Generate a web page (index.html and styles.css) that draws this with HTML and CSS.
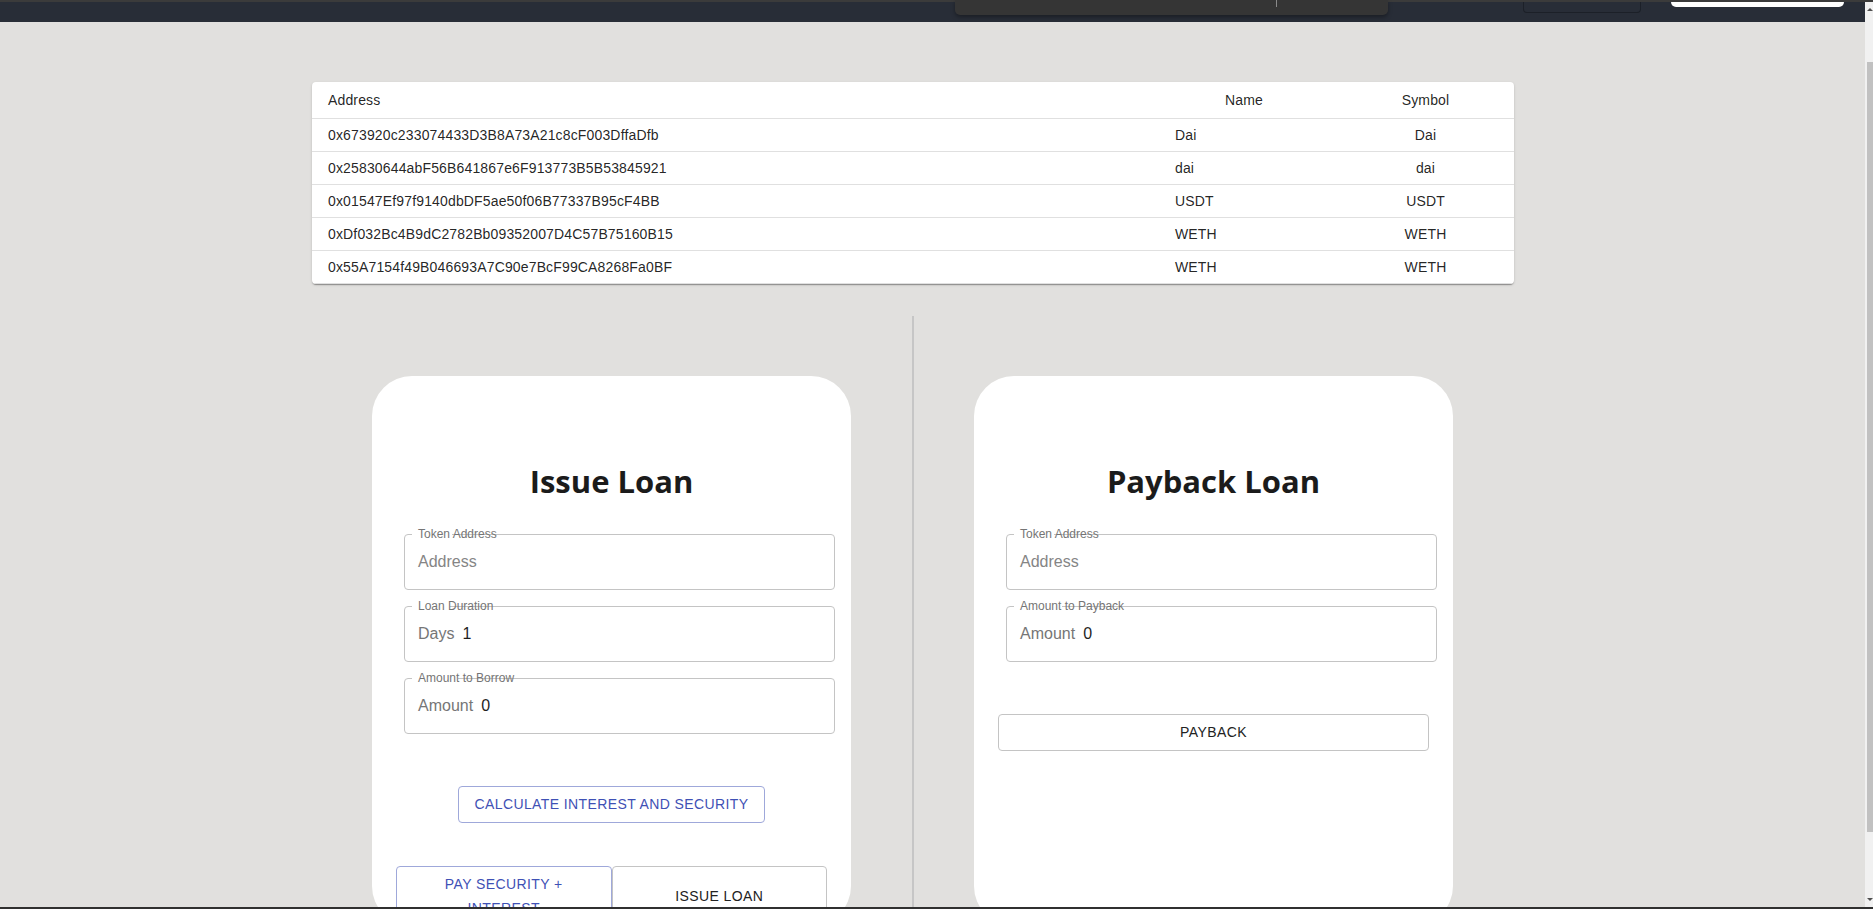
FILE: index.html
```html
<!DOCTYPE html>
<html lang="en">
<head>
<meta charset="utf-8">
<title>Loans</title>
<link rel="stylesheet" href="styles.css">
</head>
<body>
<header class="topbar">
  <div class="menu-pop"><span class="menu-sep"></span></div>
  <div class="nav-btn"></div>
  <div class="nav-pill"></div>
</header>

<main class="page">
  <div class="token-table-wrap">
    <table class="token-table">
      <colgroup><col class="c-addr"><col class="c-name"><col class="c-sym"></colgroup>
      <thead>
        <tr><th>Address</th><th class="center">Name</th><th class="center">Symbol</th></tr>
      </thead>
      <tbody>
        <tr><td>0x673920c233074433D3B8A73A21c8cF003DffaDfb</td><td>Dai</td><td class="center">Dai</td></tr>
        <tr><td>0x25830644abF56B641867e6F913773B5B53845921</td><td>dai</td><td class="center">dai</td></tr>
        <tr><td>0x01547Ef97f9140dbDF5ae50f06B77337B95cF4BB</td><td>USDT</td><td class="center">USDT</td></tr>
        <tr><td>0xDf032Bc4B9dC2782Bb09352007D4C57B75160B15</td><td>WETH</td><td class="center">WETH</td></tr>
        <tr><td>0x55A7154f49B046693A7C90e7BcF99CA8268Fa0BF</td><td>WETH</td><td class="center">WETH</td></tr>
      </tbody>
    </table>
  </div>

  <section class="forms">
    <div class="col">
      <div class="card">
        <h2 class="card-title">Issue Loan</h2>
        <div class="fields">
          <div class="field">
            <span class="notch n-token"></span>
            <span class="field-label">Token Address</span>
            <span class="ph">Address</span>
          </div>
          <div class="field">
            <span class="notch n-duration"></span>
            <span class="field-label">Loan Duration</span>
            <span class="adorn">Days</span><span class="val">1</span>
          </div>
          <div class="field">
            <span class="notch n-borrow"></span>
            <span class="field-label">Amount to Borrow</span>
            <span class="adorn">Amount</span><span class="val">0</span>
          </div>
        </div>
        <div class="calc-row">
          <button class="btn btn-primary">Calculate Interest and Security</button>
        </div>
        <div class="pair-row">
          <button class="btn btn-primary btn-half">Pay Security + Interest</button>
          <button class="btn btn-half">Issue Loan</button>
        </div>
      </div>
    </div>

    <div class="divider"></div>

    <div class="col">
      <div class="card">
        <h2 class="card-title">Payback Loan</h2>
        <div class="fields">
          <div class="field">
            <span class="notch n-token"></span>
            <span class="field-label">Token Address</span>
            <span class="ph">Address</span>
          </div>
          <div class="field">
            <span class="notch n-payback"></span>
            <span class="field-label">Amount to Payback</span>
            <span class="adorn">Amount</span><span class="val">0</span>
          </div>
        </div>
        <div class="payback-row">
          <button class="btn btn-full">Payback</button>
        </div>
      </div>
    </div>
  </section>
</main>

<div class="scrollbar">
  <span class="arrow-up"></span>
  <div class="thumb"></div>
  <span class="arrow-down"></span>
</div>
<div class="bottom-line"></div>
</body>
</html>
```

FILE: styles.css
```css
html, body {
  margin: 0;
  height: 100%;
  overflow: hidden;
}

body {
  background: #e1e0de;
  font-family: "Liberation Sans", Arial, sans-serif;
  color: rgba(0, 0, 0, 0.87);
}

/* ---------- top bar ---------- */
.topbar {
  position: relative;
  height: 20px;
  border-top: 2px solid #3b3b3b;
  background: #282d37;
  display: flex;
  align-items: flex-start;
}

.menu-pop {
  position: absolute;
  left: 955px;
  top: -2px;
  width: 433px;
  height: 15px;
  background: #353535;
  border-radius: 0 0 5px 5px;
  box-shadow: 0 2px 4px rgba(0, 0, 0, 0.35);
}

.menu-sep {
  position: absolute;
  left: 321px;
  top: 0;
  width: 1px;
  height: 7px;
  background: #8a8a8a;
}

.nav-btn {
  margin-left: 1523px;
  width: 118px;
  height: 11px;
  box-sizing: border-box;
  border: 1px solid #1c2028;
  border-top: none;
  border-radius: 0 0 4px 4px;
}

.nav-pill {
  margin-left: 30px;
  width: 173px;
  height: 5px;
  background: #ffffff;
  border-radius: 0 0 6px 6px;
}

/* ---------- page ---------- */
.page {
  padding: 60px 0 0 312px;
  width: 1202px;
}

.token-table-wrap {
  width: 1202px;
  background: #fff;
  border-radius: 4px;
  overflow: hidden;
  box-shadow: 0 2px 1px -1px rgba(0, 0, 0, 0.2),
              0 1px 1px 0 rgba(0, 0, 0, 0.14),
              0 1px 3px 0 rgba(0, 0, 0, 0.12);
}

.token-table {
  width: 100%;
  border-collapse: collapse;
  table-layout: fixed;
}

.c-addr { width: 847px; }
.c-name { width: 178px; }
.c-sym { width: 177px; }

.token-table th,
.token-table td {
  padding: 6px 24px 6px 16px;
  font-size: 14px;
  line-height: 20px;
  letter-spacing: 0.15px;
  font-weight: 400;
  text-align: left;
  color: rgba(0, 0, 0, 0.87);
  border-bottom: 1px solid #e0e0e0;
}

.token-table th {
  line-height: 23px;
  padding-top: 7px;
  padding-bottom: 6px;
}

.token-table th:last-child,
.token-table td:last-child {
  padding-right: 16px;
}

.token-table .center {
  text-align: center;
}

/* ---------- forms ---------- */
.forms {
  margin-top: 32px;
  display: flex;
  width: 1202px;
}

.col {
  width: 600px;
  padding: 60px 0 0 60px;
  box-sizing: border-box;
}

.divider {
  width: 2px;
  background: #c6c6c6;
}

.card {
  width: 479px;
  height: 550px;
  box-sizing: border-box;
  padding-top: 85px;
  background: #ffffff;
  border-radius: 40px;
}

.card-title {
  margin: 0;
  font-family: "Open Sans", "Noto Sans", sans-serif;
  font-weight: 700;
  font-size: 31px;
  line-height: 40px;
  text-align: center;
  color: #1b1b1b;
}

.fields {
  margin: 33px 16px 0 32px;
  display: flex;
  flex-direction: column;
  gap: 16px;
}

.field {
  position: relative;
  height: 56px;
  box-sizing: border-box;
  border: 1px solid #c4c4c4;
  border-radius: 4px;
  padding: 0 13px;
  display: flex;
  align-items: center;
  font-size: 16px;
}

.notch {
  position: absolute;
  left: 7px;
  top: -1px;
  height: 1px;
  background: #ffffff;
}

.n-token { width: 40px; }
.n-duration { width: 38px; }
.n-borrow { width: 46px; }
.n-payback { width: 48px; }

.field-label {
  position: absolute;
  left: 13px;
  top: -8px;
  font-size: 12px;
  line-height: 14px;
  color: #757575;
  white-space: nowrap;
}

.ph {
  color: #858585;
}

.adorn {
  color: #767676;
  margin-right: 8px;
}

.val {
  color: #1f1f1f;
}

/* ---------- buttons ---------- */
.btn {
  font-family: "Liberation Sans", Arial, sans-serif;
  font-size: 14px;
  line-height: 24.5px;
  letter-spacing: 0.4px;
  text-transform: uppercase;
  padding: 5px 15px;
  border: 1px solid #c4c4c4;
  border-radius: 4px;
  background: #ffffff;
  color: #222222;
  text-align: center;
  box-sizing: border-box;
}

.btn-primary {
  color: #3f51b5;
  border-color: #9fa8da;
}

.calc-row {
  margin-top: 52px;
  display: flex;
  justify-content: center;
}

.pair-row {
  margin: 43px 24px 0;
  display: flex;
}

.btn-half {
  flex: 1 1 0;
  display: flex;
  align-items: center;
  justify-content: center;
}

.payback-row {
  margin: 52px 24px 0;
  display: flex;
}

.btn-full {
  flex: 1;
}

/* ---------- window chrome ---------- */
.scrollbar {
  position: fixed;
  right: 0;
  top: 2px;
  bottom: 2px;
  width: 8px;
  background: #f1f1f1;
}

.thumb {
  margin: 60px 0 0 2px;
  width: 6px;
  height: 770px;
  background: #c1c1c1;
}

.arrow-up,
.arrow-down {
  position: absolute;
  left: 2px;
  width: 0;
  height: 0;
  border-left: 3px solid transparent;
  border-right: 3px solid transparent;
}

.arrow-up {
  top: 6px;
  border-bottom: 3px solid #505050;
}

.arrow-down {
  bottom: 6px;
  border-top: 3px solid #505050;
}

.bottom-line {
  position: fixed;
  left: 0;
  right: 0;
  bottom: 0;
  height: 2px;
  background: #303030;
}
```
